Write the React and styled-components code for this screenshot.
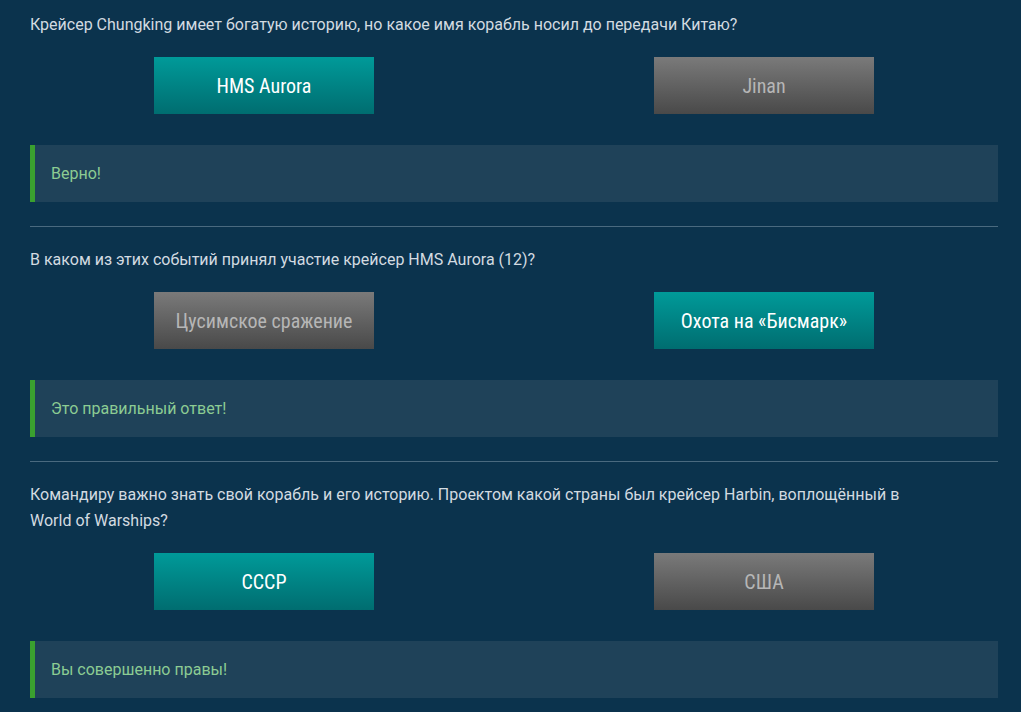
import styled, { createGlobalStyle } from "styled-components";

const GlobalStyle = createGlobalStyle`
	html, body {
		margin: 0;
		padding: 0;
		background: #0b334d;
	}
	body {
		font-family: Roboto, "Liberation Sans", sans-serif;
	}
`;

const Page = styled.main`
	width: 1021px;
	min-height: 712px;
	box-sizing: border-box;
	padding: 12px 23px 0 30px;
	background: #0b334d;
`;

const Quiz = styled.section`
	display: flex;
	flex-direction: column;
`;

const Divider = styled.hr`
	margin: 24px 0 20px;
	border: 0;
	height: 1px;
	background: #4a6a7f;
`;

const Question = styled.p`
	margin: 0;
	max-width: 885px;
	font-size: 16px;
	line-height: 26px;
	color: #d3dbe1;
`;

const Answers = styled.div`
	display: flex;
	column-gap: 280px;
	padding-left: 124px;
	margin-top: 19px;
`;

const Answer = styled.button`
	width: 220px;
	height: 57px;
	border: 0;
	padding: 0;
	cursor: pointer;
	font-family: "Roboto Condensed", "Liberation Sans Narrow", Roboto, sans-serif;
	font-size: 20px;
	font-weight: 400;
	color: ${(p) => (p.$chosen ? "#ffffff" : "#b6b6b6")};
	background: ${(p) =>
		p.$chosen
			? "linear-gradient(to bottom, #009a99, #006d70)"
			: "linear-gradient(to bottom, #7a7a7a, #494949)"};
`;

const Result = styled.div`
	display: flex;
	align-items: center;
	height: 57px;
	margin-top: 31px;
	padding-left: 16px;
	border-left: 5px solid #3aa02f;
	background: #1f4259;
	font-size: 16px;
	color: #8ccc93;
`;

const questions = [
	{
		text: "Крейсер Chungking имеет богатую историю, но какое имя корабль носил до передачи Китаю?",
		answers: ["HMS Aurora", "Jinan"],
		chosen: 0,
		result: "Верно!",
	},
	{
		text: "В каком из этих событий принял участие крейсер HMS Aurora (12)?",
		answers: ["Цусимское сражение", "Охота на «Бисмарк»"],
		chosen: 1,
		result: "Это правильный ответ!",
	},
	{
		text: "Командиру важно знать свой корабль и его историю. Проектом какой страны был крейсер Harbin, воплощённый в World of Warships?",
		answers: ["СССР", "США"],
		chosen: 0,
		result: "Вы совершенно правы!",
	},
];

function App() {
	return (
		<Page>
			<GlobalStyle />
			{questions.map((q, i) => (
				<Quiz key={i}>
					{i > 0 && <Divider />}
					<Question>{q.text}</Question>
					<Answers>
						{q.answers.map((a, j) => (
							<Answer key={a} $chosen={j === q.chosen}>
								{a}
							</Answer>
						))}
					</Answers>
					<Result>{q.result}</Result>
				</Quiz>
			))}
		</Page>
	);
}

export default App;
